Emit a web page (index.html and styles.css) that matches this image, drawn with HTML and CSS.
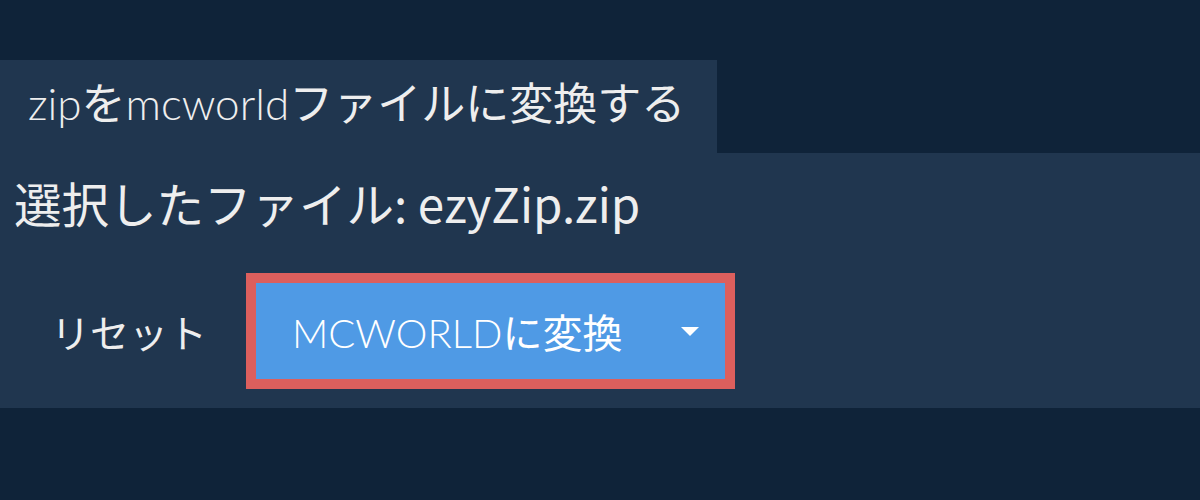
FILE: index.html
```html
<!DOCTYPE html>
<html lang="ja">
<head>
<meta charset="utf-8">
<title>zipをmcworldファイルに変換する</title>
<link rel="stylesheet" href="styles.css">
</head>
<body>
<div class="page">
  <div class="tab">zip<span class="ja">を</span>mcworld<span class="ja">ファイルに変換する</span></div>
  <section class="panel">
    <div class="selected">選択したファイル: ezyZip.zip</div>
    <div class="actions">
      <span class="reset">リセット</span>
      <div class="convert">
        <span class="convert-label">MCWORLD<span class="ja">に変換</span></span>
        <svg class="caret" width="18" height="9" viewBox="0 0 18 9"><path d="M0 0 H18 L9 9 Z" fill="#ffffff"/></svg>
      </div>
    </div>
  </section>
</div>
</body>
</html>
```
FILE: styles.css
```css
html, body {
  margin: 0;
  padding: 0;
  background: #0f2339;
}
body {
  font-family: Lato, "Noto Sans CJK JP", sans-serif;
  font-weight: 300;
  color: #eeeeee;
}
.ja {
  font-weight: 400;
}
.page {
  padding-top: 60px;
}
.tab {
  display: inline-block;
  height: 93px;
  box-sizing: border-box;
  padding: 17px 0 0 28px;
  background: #20364f;
  font-size: 44px;
  line-height: 52px;
  width: 717px;
}
.panel {
  background: #20364f;
  height: 255px;
  box-sizing: border-box;
  padding: 20px 0 0 14px;
}
.selected {
  font-family: "Noto Sans CJK JP", sans-serif;
  font-weight: 400;
  font-size: 47.5px;
  line-height: 60px;
}
.actions {
  display: flex;
  align-items: center;
  margin-top: 40px;
}
.reset {
  font-family: "Noto Sans CJK JP", sans-serif;
  font-weight: 400;
  font-size: 39px;
  margin-left: 37px;
  width: 195px;
}
.convert {
  display: flex;
  align-items: center;
  width: 469px;
  height: 96px;
  background: #4f9ae5;
  border: 10px solid #dc5f5d;
  box-sizing: content-box;
  color: #ffffff;
  font-size: 40px;
}
.convert-label {
  margin-left: 36px;
}
.caret {
  margin-left: auto;
  margin-right: 26px;
}
```
